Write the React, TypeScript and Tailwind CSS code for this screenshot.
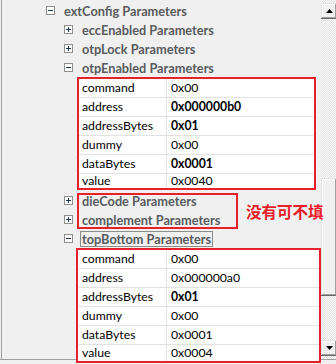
type Row = { name: string; value: string; bold?: boolean };

const otpEnabled: Row[] = [
  { name: 'command', value: '0x00' },
  { name: 'address', value: '0x000000b0', bold: true },
  { name: 'addressBytes', value: '0x01', bold: true },
  { name: 'dummy', value: '0x00' },
  { name: 'dataBytes', value: '0x0001', bold: true },
  { name: 'value', value: '0x0040' },
];

const topBottom: Row[] = [
  { name: 'command', value: '0x00' },
  { name: 'address', value: '0x000000a0' },
  { name: 'addressBytes', value: '0x01', bold: true },
  { name: 'dummy', value: '0x00' },
  { name: 'dataBytes', value: '0x0001' },
  { name: 'value', value: '0x0004' },
];

function Expander({ open }: { open: boolean }) {
  return (
    <svg width="9" height="9" viewBox="0 0 9 9" className="shrink-0">
      <rect x="0.5" y="0.5" width="8" height="8" fill="#fdfdfd" stroke="#8f8f8f" />
      <path d="M2 4.5h5" stroke="#1f3554" />
      {!open && <path d="M4.5 2v5" stroke="#1f3554" />}
    </svg>
  );
}

function Node({ label, open, level, focused }: { label: string; open: boolean; level: 1 | 2; focused?: boolean }) {
  return (
    <div className={level === 1 ? 'flex h-[19px] items-center gap-[7px] pl-[44px]' : 'flex h-[19px] items-center gap-[7px] pl-[62px]'}>
      <Expander open={open} />
      <span
        className={
          focused
            ? 'border border-[#8c8c8c] px-[1px] text-[12.75px] leading-[14px] font-bold text-[#595b5e]'
            : 'border border-transparent px-[1px] text-[12.75px] leading-[14px] font-bold text-[#595b5e]'
        }
      >
        {label}
      </span>
    </div>
  );
}

function GridRows({ rows, labelClass, lastClass }: { rows: Row[]; labelClass: string; lastClass: string }) {
  return (
    <>
      {rows.map((row, index) => {
        const last = index === rows.length - 1;
        return (
          <div
            key={row.name}
            className={last ? `flex bg-white ${lastClass}` : 'flex h-[19px] border-b border-[#e3e3e3] bg-white'}
          >
            <div className={labelClass}>{row.name}</div>
            <div className={row.bold ? 'flex flex-1 items-center pl-[4px] font-bold' : 'flex flex-1 items-center pl-[4px]'}>
              {row.value}
            </div>
          </div>
        );
      })}
    </>
  );
}

function ScrollButton({ up }: { up: boolean }) {
  return (
    <div className="flex h-[16px] w-[16px] items-center justify-center bg-[#f0f0f0] shadow-[inset_-1px_-1px_#696969,inset_1px_1px_#e3e3e3,inset_-2px_-2px_#a0a0a0,inset_2px_2px_#ffffff]">
      <svg width="7" height="4" viewBox="0 0 7 4">
        {up ? <path d="M3.5 0L7 4H0z" fill="#000" /> : <path d="M0 0h7L3.5 4z" fill="#000" />}
      </svg>
    </div>
  );
}

export default function App() {
  return (
    <div className="relative h-[364px] w-[336px] overflow-hidden bg-[#f0f0f0] font-['Lato',sans-serif] text-[12.25px] text-black">
      <div className="flex h-[360px] border-b border-[#a0a0a0]">
        <div className="ml-[1px] flex-1 border-l border-[#a0a0a0] pt-[1px]">
          <Node label="extConfig Parameters" open level={1} />
          <Node label="eccEnabled Parameters" open={false} level={2} />
          <Node label="otpLock Parameters" open={false} level={2} />
          <Node label="otpEnabled Parameters" open level={2} />

          <div className="ml-[75px] w-[239px] border-2 border-[#e8202a]">
            <GridRows
              rows={otpEnabled}
              labelClass="flex w-[88px] items-center border-r border-[#e3e3e3] pl-[3px]"
              lastClass="h-[14px]"
            />
          </div>

          <div className="mt-[1px]">
            <Node label="dieCode Parameters" open={false} level={2} />
            <Node label="complement Parameters" open={false} level={2} />
            <Node label="topBottom Parameters" open level={2} focused />
          </div>

          <div className="relative z-10 ml-[74px] w-[245px] border-2 border-[#e8202a]">
            <GridRows
              rows={topBottom}
              labelClass="flex w-[89px] items-center border-r border-[#e3e3e3] pl-[4px]"
              lastClass="h-[16px]"
            />
          </div>
        </div>

        <div className="flex w-[20px] flex-col bg-[repeating-conic-gradient(#fbfbfb_0%_25%,#e4e4e4_0%_50%)] bg-[length:2px_2px] pt-[3px]">
          <ScrollButton up />
          <div className="mt-[159px] h-[118px] w-[16px] bg-[#f0f0f0] shadow-[inset_-1px_-1px_#696969,inset_1px_1px_#e3e3e3,inset_-2px_-2px_#a0a0a0,inset_2px_2px_#ffffff]" />
          <div className="mt-[44px]">
            <ScrollButton up={false} />
          </div>
        </div>
      </div>

      <div className="absolute left-[77px] top-[193px] h-[36px] w-[161px] border-2 border-[#e8202a]" />
      <div className="absolute left-[246px] top-[201px] font-['Noto_Sans_CJK_SC',sans-serif] text-[15.5px] leading-[20px] font-bold text-[#e8202a]">
        没有可不填
      </div>
    </div>
  );
}
